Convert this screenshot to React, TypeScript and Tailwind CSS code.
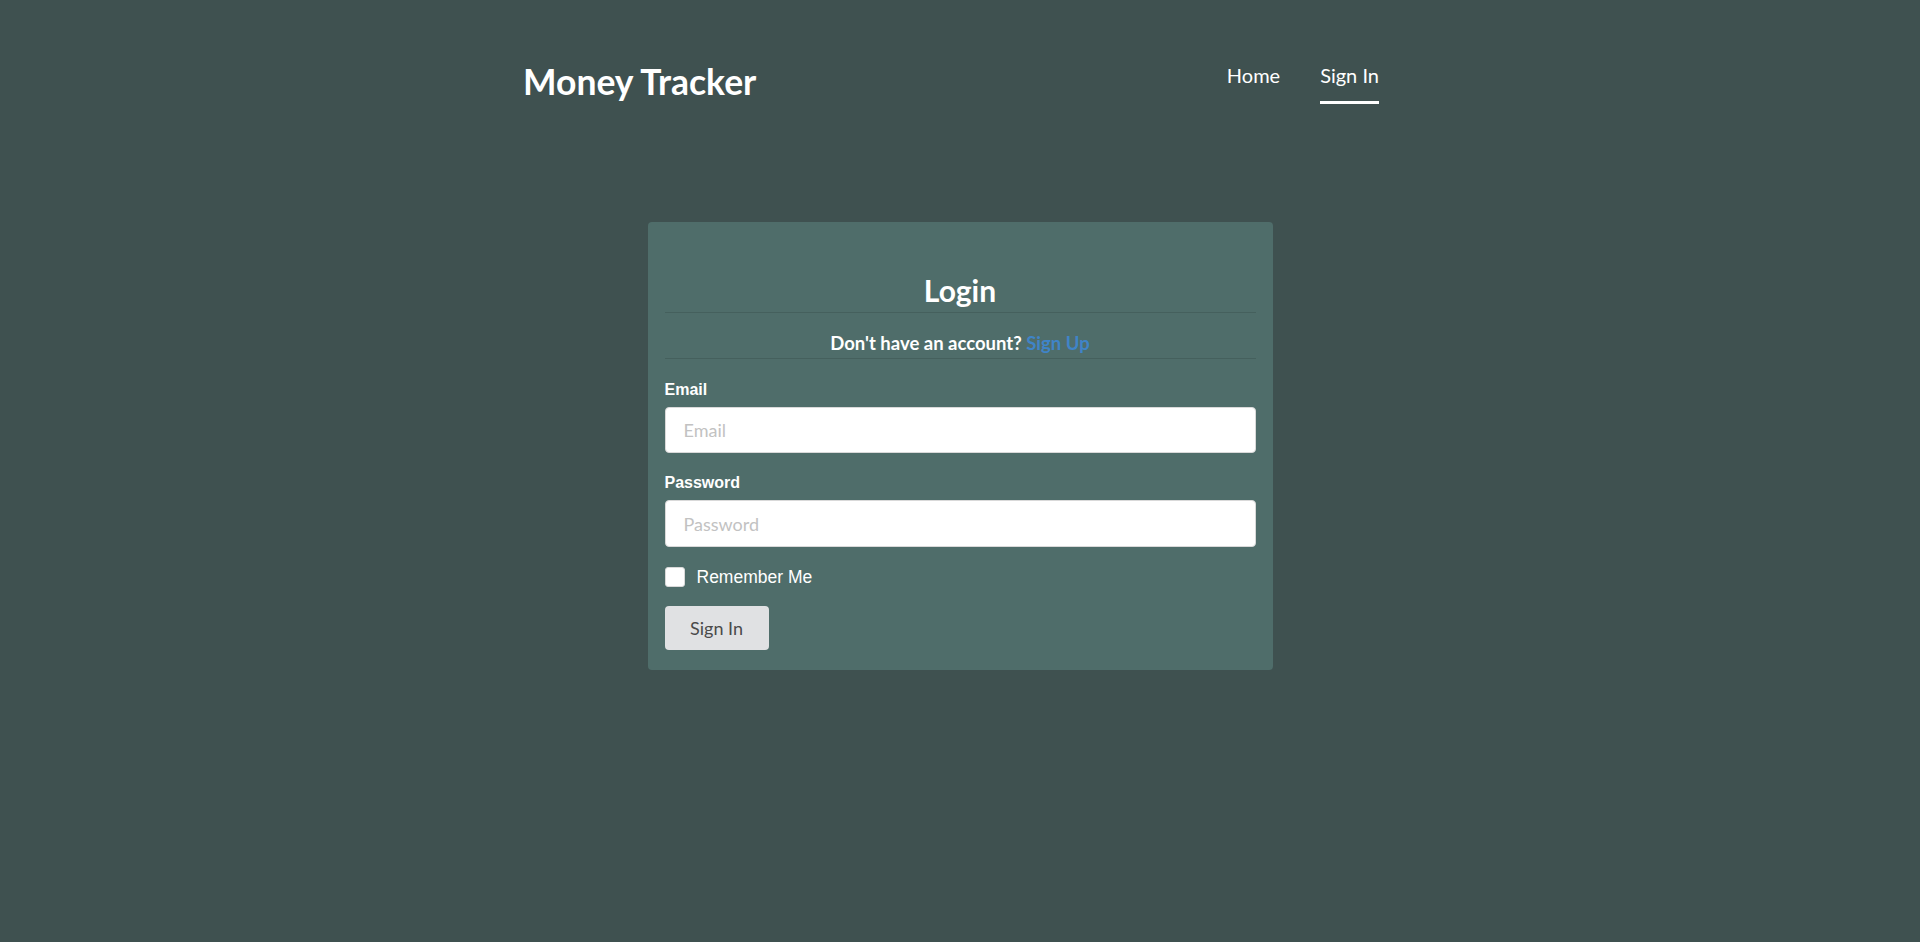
import { useState } from "react";

export default function App() {
  const [remember, setRemember] = useState(false);

  return (
    <div className="min-h-screen w-full bg-[#3f5150] font-['Lato',sans-serif] text-white">
      {/* Header */}
      <header className="mx-auto flex max-w-[874px] items-start justify-between pt-[63px]">
        <h1 className="-mt-[2px] text-[35.5px] font-bold leading-[42px]">Money Tracker</h1>
        <nav className="flex text-[20px] leading-[24px]">
          <a href="#" className="px-5 pb-[17px]">
            Home
          </a>
          <a href="#" className="pl-5 pr-[18px]">
            <span className="block border-b-[3px] border-white pb-[14px]">Sign In</span>
          </a>
        </nav>
      </header>

      {/* Login card */}
      <main className="flex justify-center pt-[118px]">
        <div className="w-[625px] rounded-[4px] bg-[#4f6d6a] px-[17px] pb-[20px] pt-[50px]">
          <h2 className="border-b border-[#45605d] pb-[4px] text-center text-[30px] font-bold leading-[36px]">
            Login
          </h2>
          <p className="border-b border-[#45605d] pb-[4px] pt-[19px] text-center text-[18.5px] font-bold leading-[22px]">
            Don't have an account?{" "}
            <a href="#" className="text-[#3f84c8]">
              Sign Up
            </a>
          </p>

          <form className="flex flex-col" onSubmit={(e) => e.preventDefault()}>
            <label className="mt-[22px] font-['Liberation_Sans',Arial,sans-serif] text-[16px] font-bold leading-[18px]">
              Email
            </label>
            <input
              type="email"
              placeholder="Email"
              className="mt-[8px] h-[46px] w-full rounded-[4px] border border-[#d9d9d9] bg-white px-[18px] text-[18px] text-[#333] placeholder:text-[#c2c2c2] outline-none"
            />

            <label className="mt-[21px] font-['Liberation_Sans',Arial,sans-serif] text-[16px] font-bold leading-[18px]">
              Password
            </label>
            <input
              type="password"
              placeholder="Password"
              className="mt-[8px] h-[47px] w-full rounded-[4px] border border-[#d9d9d9] bg-white px-[18px] text-[18px] text-[#333] placeholder:text-[#c2c2c2] outline-none"
            />

            <label className="mt-[20px] flex items-center gap-[12px] font-['Liberation_Sans',Arial,sans-serif] text-[17.5px] leading-[20px]">
              <span
                onClick={() => setRemember(!remember)}
                className="flex h-[20px] w-[20px] items-center justify-center rounded-[3px] border border-[#d9d9d9] bg-white text-[14px] text-[#333]"
              >
                {remember ? "✓" : ""}
              </span>
              Remember Me
            </label>

            <div className="mt-[19px]">
              <button
                type="submit"
                className="h-[44px] w-[104px] rounded-[4px] bg-[#e0e1e3] text-[18px] text-[#4a4a4a]"
              >
                Sign In
              </button>
            </div>
          </form>
        </div>
      </main>
    </div>
  );
}
